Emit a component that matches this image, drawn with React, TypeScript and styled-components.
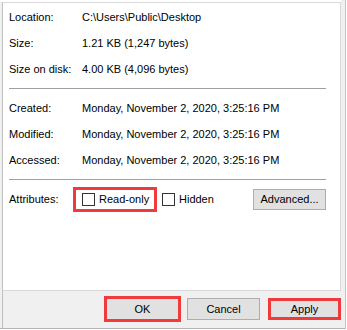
import React from 'react';
import styled, { createGlobalStyle } from 'styled-components';

const GlobalStyle = createGlobalStyle`
  html, body {
    margin: 0;
    padding: 0;
    background: #ffffff;
  }
  body {
    font-family: "Liberation Sans", Arial, sans-serif;
    font-size: 11px;
    color: #000000;
  }
`;

const infoRows = [
  { label: 'Location:', value: 'C:\\Users\\Public\\Desktop' },
  { label: 'Size:', value: '1.21 KB (1,247 bytes)' },
  { label: 'Size on disk:', value: '4.00 KB (4,096 bytes)' },
];

const dateRows = [
  { label: 'Created:', value: 'Monday, November 2, 2020, 3:25:16 PM' },
  { label: 'Modified:', value: 'Monday, November 2, 2020, 3:25:16 PM' },
  { label: 'Accessed:', value: 'Monday, November 2, 2020, 3:25:16 PM' },
];

const App = () => {
  return (
    <>
      <GlobalStyle />
      <Frame>
        <TabPage>
          <Section>
            {infoRows.map((r) => (
              <Row key={r.label}>
                <Label>{r.label}</Label>
                <Value>{r.value}</Value>
              </Row>
            ))}
          </Section>
          <Divider />
          <Section>
            {dateRows.map((r) => (
              <Row key={r.label}>
                <Label>{r.label}</Label>
                <Value>{r.value}</Value>
              </Row>
            ))}
          </Section>
          <Divider />
          <AttrRow>
            <Label>Attributes:</Label>
            <Marked>
              <CheckItem>
                <Box />
                <span>Read-only</span>
              </CheckItem>
            </Marked>
            <CheckItem>
              <Box />
              <span>Hidden</span>
            </CheckItem>
            <AdvancedButton>Advanced...</AdvancedButton>
          </AttrRow>
        </TabPage>
        <Footer>
          <Button $mark="wide">OK</Button>
          <Button>Cancel</Button>
          <Button $mark="tight">Apply</Button>
        </Footer>
      </Frame>
    </>
  );
};

export default App;

const Frame = styled.div`
  box-sizing: border-box;
  width: 346px;
  height: 329px;
  padding: 2px 0 0 2px;
  background: linear-gradient(#ffffff, #ffffff) 0 0 / 341px 2px no-repeat, #f0f0f0;
  border-right: 1px solid #c6c6c6;
  border-bottom: 1px solid #b4b4b4;
  display: flex;
  flex-direction: column;
`;

const TabPage = styled.div`
  box-sizing: border-box;
  width: 339px;
  height: 289px;
  background: #ffffff;
  border: 1px solid #d9d9d9;
  border-left-color: #c0c0c0;
  padding: 1px 14px 0 6px;
`;

const Section = styled.div`
  display: flex;
  flex-direction: column;
`;

const Row = styled.div`
  display: grid;
  grid-template-columns: 73px 1fr;
  align-items: center;
  height: 26px;
  white-space: nowrap;
`;

const Label = styled.div`
  width: 73px;
  flex-shrink: 0;
`;

const Value = styled.div``;

const Divider = styled.div`
  height: 1px;
  background: #a0a0a0;
  margin: 6px 0;
`;

const AttrRow = styled.div`
  display: flex;
  align-items: center;
  height: 26px;
  white-space: nowrap;
`;

const Marked = styled.div`
  box-sizing: border-box;
  display: flex;
  align-items: center;
  width: 84px;
  height: 25px;
  margin-left: -9px;
  padding: 0 0 0 6px;
  border: 3px solid #ef3b3b;
  margin-right: 5px;
`;

const CheckItem = styled.label`
  display: flex;
  align-items: center;
  gap: 4px;
`;

const Box = styled.span`
  box-sizing: border-box;
  width: 13px;
  height: 13px;
  border: 1px solid #333333;
  background: #ffffff;
`;

const AdvancedButton = styled.button`
  box-sizing: border-box;
  margin-left: auto;
  width: 73px;
  height: 21px;
  padding: 0;
  border: 1px solid #adadad;
  background: #e1e1e1;
  font: inherit;
  color: #000000;
`;

const Footer = styled.div`
  flex: 1;
  display: flex;
  justify-content: flex-end;
  align-items: flex-start;
  gap: 8px;
  padding: 7px 4px 0 0;
  border-left: 1px solid #c0c0c0;
`;

const Button = styled.button<{ $mark?: 'wide' | 'tight' }>`
  box-sizing: border-box;
  width: 73px;
  height: 22px;
  padding: 0;
  border: 1px solid #adadad;
  background: #e1e1e1;
  font: inherit;
  color: #000000;
  outline: ${(p) => (p.$mark ? '3px solid #ef3b3b' : 'none')};
  outline-offset: ${(p) => (p.$mark === 'wide' ? '-1px' : '-3px')};
`;
